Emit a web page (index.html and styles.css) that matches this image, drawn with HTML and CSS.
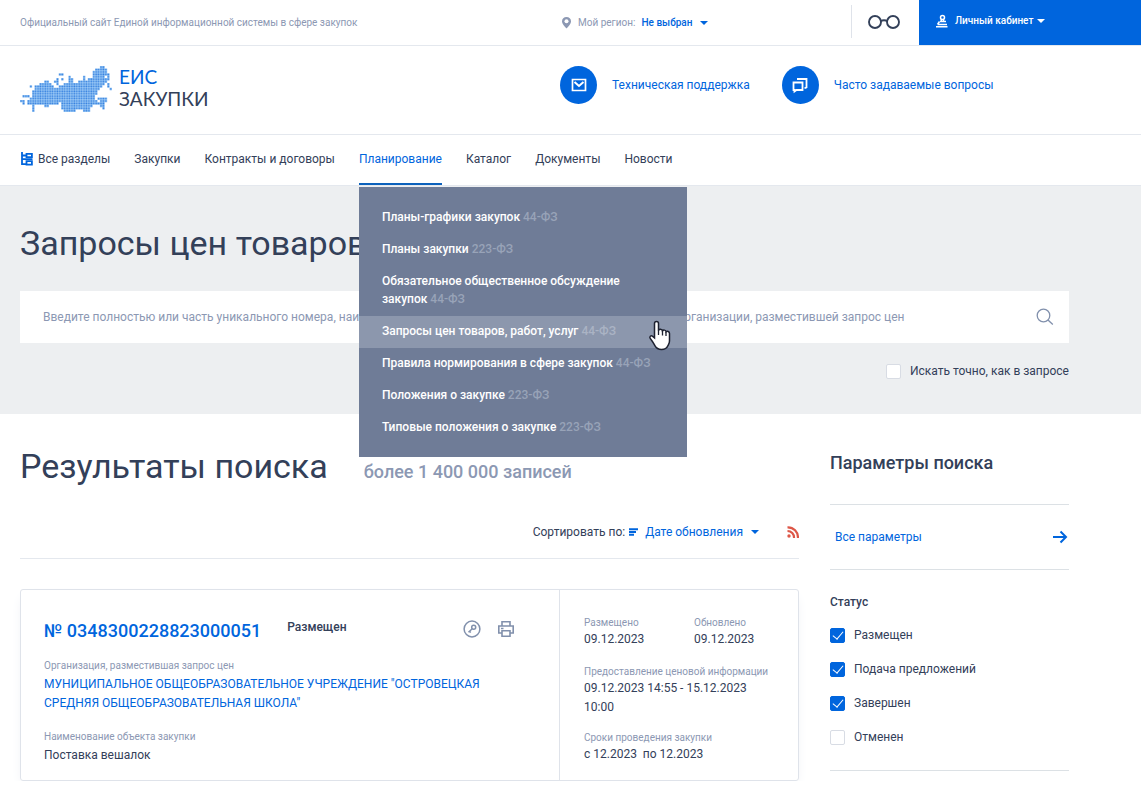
FILE: index.html
```html
<!DOCTYPE html>
<html lang="ru">
<head>
<meta charset="utf-8">
<title>ЕИС Закупки</title>
<link rel="stylesheet" href="styles.css">
</head>
<body>
<div class="topbar">
  <div class="topbar-main">
    <span class="tagline">Официальный сайт Единой информационной системы в сфере закупок</span>
    <div class="region">
      <svg class="pin" width="11" height="13" viewBox="0 0 11 13"><path d="M5.500 1C2.800 1 1 2.900 1 5.200 1 8.200 5.500 12.500 5.500 12.500S10 8.200 10 5.200C10 2.900 8.200 1 5.500 1z" fill="#8c98b3"/><circle cx="5.500" cy="5.200" r="2" fill="#fff"/></svg>
      <span>Мой регион:</span>
      <button class="region-btn" type="button">Не выбран <span class="caret"></span></button>
    </div>
  </div>
  <button class="glasses" type="button" aria-label="Версия для слабовидящих">
    <svg width="32" height="16" viewBox="0 0 32 16" fill="none" stroke="#334059" stroke-width="1.900"><circle cx="7" cy="8" r="6"/><circle cx="25" cy="8" r="6"/><path d="M12.800 7.200c1.500-1.200 4.900-1.200 6.400 0"/></svg>
  </button>
  <button class="account" type="button">
    <svg width="14" height="14" viewBox="0 0 14 14" fill="none" stroke="#fff" stroke-width="1.500"><path d="M1 12.800h11.500M2.500 10.500h9.500M4.500 7.500L2.500 10.500M5 7.500h6M6.300 7V5M8.500 7.500V5"/><circle cx="7.500" cy="3.400" r="2"/></svg>
    <span>Личный кабинет</span><span class="caret"></span>
  </button>
</div>

<header class="header">
  <a class="logo" href="#">
    <svg width="92" height="46" viewBox="0 0 38 19">
      <defs><pattern id="dots" width="1" height="1" patternUnits="userSpaceOnUse"><rect width="1" height="1" fill="#c4e6ff"/><rect x=".1" y=".1" width=".75" height=".75" fill="#3480df"/></pattern></defs>
      <path fill="url(#dots)" d="M33 0h2v1h-2zM31 1h5v1h-5zM30 2h6v1h-6zM16 3h2v1h-2zM30 3h7v1h-7zM20 4h1v1h-1zM26 4h1v1h-1zM30 4h5v1h-5zM36 4h1v1h-1zM15 5h1v1h-1zM17 5h1v1h-1zM20 5h2v1h-2zM26 5h1v1h-1zM28 5h9v1h-9zM10 6h2v1h-2zM14 6h2v1h-2zM20 6h2v1h-2zM24 6h12v1h-12zM8 7h5v1h-5zM15 7h1v1h-1zM18 7h17v1h-17zM36 7h1v1h-1zM4 8h1v1h-1zM6 8h8v1h-8zM16 8h18v1h-18zM36 8h1v1h-1zM6 9h27v1h-27zM37 9h1v1h-1zM5 10h27v1h-27zM5 11h27v1h-27zM1 12h3v1h-3zM5 12h26v1h-26zM4 13h27v1h-27zM32 13h4v1h-4zM0 14h2v1h-2zM3 14h29v1h-29zM33 14h3v1h-3zM1 15h1v1h-1zM3 15h13v1h-13zM17 15h18v1h-18zM5 16h1v1h-1zM10 16h2v1h-2zM17 16h13v1h-13zM33 16h2v1h-2zM5 17h1v1h-1zM17 17h12v1h-12zM34 17h1v1h-1zM5 18h1v1h-1zM18 18h5v1h-5zM26 18h3v1h-3z"/>
    </svg>
    <span class="logo-text"><span class="logo-top">ЕИС</span><span>ЗАКУПКИ</span></span>
  </a>
  <div class="help">
    <a class="help-link" href="#"><span class="disc"><svg width="16" height="14" viewBox="0 0 16 14" fill="none" stroke="#fff" stroke-width="1.700"><path d="M1.500 1.500h13v11h-13z"/><path d="M3.500 4L8 8l4.500-4" stroke-width="2"/></svg></span><span>Техническая поддержка</span></a>
    <a class="help-link" href="#"><span class="disc"><svg width="18" height="18" viewBox="0 0 18 18" fill="none" stroke="#fff" stroke-width="1.800"><path d="M2.500 6.500h9v7.500h-6l-2 1.500V14h-1z"/><path d="M6 3h9.500v9M15.500 11.800h-2"/></svg></span><span>Часто задаваемые вопросы</span></a>
  </div>
</header>

<nav class="nav">
  <a class="nav-item" href="#"><svg width="14" height="14" viewBox="0 0 14 14" fill="none" stroke="#0065dd" stroke-width="1.800"><path d="M2 0v12.200h4M2 3.500h4M6.500 1.800h5.400v3.400H6.500zM6.500 9.200h5.400v3.400H6.500zM2 7.200h10.500"/></svg>Все разделы</a>
  <a class="nav-item" href="#">Закупки</a>
  <a class="nav-item" href="#">Контракты и договоры</a>
  <div class="nav-open">
    <a class="nav-item active" href="#">Планирование</a>
    <div class="menu">
      <a href="#">Планы-графики закупок <span>44-ФЗ</span></a>
      <a href="#">Планы закупки <span>223-ФЗ</span></a>
      <a href="#">Обязательное общественное обсуждение закупок <span>44-ФЗ</span></a>
      <a class="hovered" href="#">Запросы цен товаров, работ, услуг <span>44-ФЗ</span></a>
      <a href="#">Правила нормирования в сфере закупок <span>44-ФЗ</span></a>
      <a href="#">Положения о закупке <span>223-ФЗ</span></a>
      <a href="#">Типовые положения о закупке <span>223-ФЗ</span></a>
      <svg class="pointer" width="24" height="32" viewBox="0 0 24 32"><path d="M8.500 1.500c1.300 0 2 .8 2 2v7c.4-1.800 3.600-1.700 4 .5.700-1.400 3.300-1.200 3.600.8 1-1 3.400-.4 3.400 1.700v7.500c0 2-.8 3.200-1.500 4.500-1 2.500-3 4-6.500 4-3.300 0-5.200-1.400-6.800-4.200C5.300 22.800 4.300 21 2.300 18.500c-1.300-1.700.6-3.500 2.400-2.200l1.800 1.500V3.500c0-1.200.7-2 2-2z" fill="#fff" stroke="#1d2130" stroke-width="1.500"/><path d="M10.500 10v5M14.500 11v4.500M18 12v4" stroke="#1d2130" stroke-width="1.300"/></svg>
    </div>
  </div>
  <a class="nav-item" href="#">Каталог</a>
  <a class="nav-item" href="#">Документы</a>
  <a class="nav-item" href="#">Новости</a>
</nav>

<section class="hero">
  <h1>Запросы цен товаров</h1>
  <form class="search">
    <input class="search-input" type="text" aria-label="Поиск" placeholder="Введите полностью или часть уникального номера, наименования закупки, ИНН, наименование заказчика или организации, разместившей запрос цен">
    <button class="search-btn" type="button" aria-label="Найти"><svg width="18" height="18" viewBox="0 0 18 18" fill="none" stroke="#8190ac" stroke-width="1.300"><circle cx="7.500" cy="7.500" r="6.300"/><path d="M12 12l4.800 4.500"/></svg></button>
  </form>
  <label class="check exact"><input type="checkbox">Искать точно, как в запросе</label>
</section>

<main class="content">
  <section>
    <div class="results-head"><h2>Результаты поиска</h2><span class="count">более 1 400 000 записей</span></div>
    <div class="sort">
      <span>Сортировать по:</span>
      <svg width="9" height="8" viewBox="0 0 9 8" fill="none" stroke="#0065dd" stroke-width="1.900"><path d="M0 1.200h9M0 4h7M0 6.800h5"/></svg>
      <button class="sort-btn" type="button">Дате обновления<span class="caret"></span></button>
      <a class="rss" href="#" aria-label="RSS"><svg width="12" height="12" viewBox="0 0 12 12" fill="none" stroke="#dd5748" stroke-width="2.200"><circle cx="2" cy="10" r="1.700" fill="#dd5748" stroke="none"/><path d="M.5 5a6.500 6.500 0 0 1 6.500 7M.5 1.300A10 10 0 0 1 10.900 12"/></svg></a>
    </div>
    <article class="card">
      <div class="card-main">
        <div class="card-head">
          <a class="number" href="#">№ 0348300228823000051</a>
          <span class="state">Размещен</span>
          <button class="icon-btn" type="button" aria-label="Подпись"><svg width="18" height="18" viewBox="0 0 18 18" fill="none" stroke="#8190ac" stroke-width="1.500"><circle cx="9" cy="9" r="7.900"/><circle cx="10.700" cy="7.200" r="2"/><path d="M9.200 8.700L5.500 12.300M6.500 11.300l1.300 1.200"/></svg></button>
          <button class="icon-btn" type="button" aria-label="Печать"><svg width="18" height="18" viewBox="0 0 18 18" fill="none" stroke="#8190ac" stroke-width="1.600"><path d="M5 6V1.800h8V6M4.500 13H1.800V6h14.400v7h-2.700M5 10.800h8v5.500H5zM4 8.500h2.500"/></svg></button>
        </div>
        <div class="field"><span class="label">Организация, разместившая запрос цен</span><a href="#">МУНИЦИПАЛЬНОЕ ОБЩЕОБРАЗОВАТЕЛЬНОЕ УЧРЕЖДЕНИЕ "ОСТРОВЕЦКАЯ СРЕДНЯЯ ОБЩЕОБРАЗОВАТЕЛЬНАЯ ШКОЛА"</a></div>
        <div class="field"><span class="label">Наименование объекта закупки</span><span>Поставка вешалок</span></div>
      </div>
      <div class="card-side">
        <div class="dates">
          <div class="field"><span class="label">Размещено</span><span>09.12.2023</span></div>
          <div class="field"><span class="label">Обновлено</span><span>09.12.2023</span></div>
        </div>
        <div class="field"><span class="label">Предоставление ценовой информации</span><span>09.12.2023 14:55 - 15.12.2023 10:00</span></div>
        <div class="field"><span class="label">Сроки проведения закупки</span><span>с 12.2023 &nbsp;по 12.2023</span></div>
      </div>
    </article>
  </section>
  <aside class="params">
    <h3>Параметры поиска</h3>
    <a class="all-params" href="#"><span>Все параметры</span><svg width="16" height="14" viewBox="0 0 16 14" fill="none" stroke="#0065dd" stroke-width="2"><path d="M1 7h13M8.500 1.500L14 7l-5.500 5.500"/></svg></a>
    <fieldset class="status">
      <legend>Статус</legend>
      <label class="check"><input type="checkbox" checked>Размещен</label>
      <label class="check"><input type="checkbox" checked>Подача предложений</label>
      <label class="check"><input type="checkbox" checked>Завершен</label>
      <label class="check"><input type="checkbox">Отменен</label>
    </fieldset>
  </aside>
</main>
</body>
</html>
```
FILE: styles.css
```css
* { box-sizing: border-box; }
body { margin: 0; font-family: Roboto, "Liberation Sans", sans-serif; font-size: 12px; line-height: 18px; color: #334059; background: #fff; overflow-x: hidden; }
a { color: #0065dd; text-decoration: none; }
button { font: inherit; border: 0; padding: 0; margin: 0; background: none; cursor: pointer; }
svg { display: block; flex: none; }
h1, h2, h3 { margin: 0; }

.caret { display: inline-block; border: 4px solid transparent; border-top-color: currentColor; border-bottom: 0; }

.topbar { display: flex; height: 46px; border-bottom: 1px solid #e4e8ee; font-size: 10px; line-height: 14px; }
.topbar-main { flex: 1; display: grid; grid-template-columns: 541px 1fr; align-items: center; padding-left: 20px; color: #8c98b3; }
.region { display: flex; align-items: center; gap: 6px; }
.region-btn { display: flex; align-items: center; gap: 8px; color: #0065dd; font-weight: 500; }
.glasses { width: 68px; height: 33px; margin-top: 5px; padding-right: 4px; border-left: 1px solid #dfe3ea; display: flex; align-items: center; justify-content: center; }
.account { width: 222px; height: 45px; padding: 0 16px 4px; display: flex; align-items: center; background: #0065dd; color: #fff; font-weight: 500; }
.account svg { margin-right: 6px; }
.account .caret { margin-left: 4px; }

.header { height: 89px; display: grid; grid-template-columns: 540px 1fr; padding: 20px 72px 0 20px; border-bottom: 1px solid #e4e8ee; }
.logo { display: flex; align-items: flex-start; gap: 7px; height: 46px; color: #334059; }
.logo-text { display: flex; flex-direction: column; font: 400 19px/22px Lato, Roboto, sans-serif; }
.logo-top { color: #0065dd; }
.help { display: flex; align-items: flex-start; gap: 32px; }
.help-link { display: flex; align-items: center; gap: 15px; }
.disc { width: 37px; height: 38px; border-radius: 50%; background: #0065dd; display: flex; align-items: center; justify-content: center; }

.nav { height: 51px; padding: 0 20px; display: flex; gap: 24px; border-bottom: 1px solid #e4e8ee; }
.nav-item { display: flex; align-items: center; gap: 4px; height: 50px; color: #334059; border-bottom: 2px solid transparent; }
.nav-open { position: relative; }
.active { color: #0065dd; border-bottom-color: #0c61bb; }
.menu { position: absolute; z-index: 5; top: 52px; left: 0; width: 328px; padding: 15px 0 13px; background: #6f7c97; font-weight: 500; }
.menu a { display: block; padding: 6px 24px 8px 23px; color: #fff; }
.menu a span { color: #98a3b8; }
.menu a.hovered { background: #8c97ad; }
.menu a.hovered span { color: #aab3c4; }
.pointer { position: absolute; left: 289px; top: 133px; }

.hero { background: #edeff1; padding: 34px 72px 34px 20px; display: flex; flex-direction: column; }
h1, h2 { font-size: 34px; line-height: 46px; font-weight: 400; }
.search { display: flex; height: 52px; margin-top: 25px; background: #fff; }
.search-input { flex: 1; min-width: 0; border: 0; outline: 0; padding: 0 23px; background: none; font: inherit; color: #334059; }
.search-input::placeholder { color: #8c98b3; opacity: 1; }
.search-btn { width: 48px; display: flex; align-items: center; justify-content: center; }
.check { display: flex; align-items: center; gap: 9px; }
.check input { appearance: none; width: 15px; height: 15px; margin: 0; border: 1px solid #d8dce4; border-radius: 2px; background: #fff; }
.check input:checked { border-color: #0065dd; background: #0065dd; display: flex; justify-content: center; }
.check input:checked::after { content: ""; width: 5px; height: 9px; border: solid #fff; border-width: 0 1px 1px 0; transform: rotate(40deg); }
.exact { align-self: flex-end; margin-top: 19px; }

.content { display: grid; grid-template-columns: 1fr 239px; gap: 31px; padding: 29px 72px 0 20px; }
.results-head { display: flex; align-items: baseline; gap: 36px; }
.count { font-size: 18px; font-weight: 500; color: #8c98b3; }
.sort { display: flex; align-items: center; justify-content: flex-end; margin-top: 34px; padding-bottom: 17px; border-bottom: 1px solid #e4e8ee; }
.sort > svg { margin: 0 7px 0 4px; }
.sort-btn { display: flex; align-items: center; gap: 8px; color: #0065dd; }
.rss { margin-left: 28px; }
.card { display: grid; grid-template-columns: 1fr 239px; margin-top: 30px; border: 1px solid #dfe3ea; border-radius: 3px; box-shadow: 0 6px 12px -4px #e6e9f0; }
.card-main { padding: 26px 24px 15px 23px; }
.card-head { display: flex; align-items: center; height: 30px; margin-bottom: 10px; }
.number { font-size: 18px; line-height: 24px; font-weight: 500; }
.state { font-weight: 500; margin: 0 auto 8px 26px; }
.icon-btn { margin: 0 20px 4px -4px; }
.icon-btn + .icon-btn { margin-left: -4px; }
.field { display: flex; flex-direction: column; line-height: 19px; margin-bottom: 14px; }
.field:last-child { margin-bottom: 0; }
.label { font-size: 10px; line-height: 19px; color: #8c98b3; }
.card-side { padding: 26px 20px 15px 24px; border-left: 1px solid #dfe3ea; }
.card-side .label { line-height: 14px; }
.dates { display: grid; grid-template-columns: 110px 1fr; margin-bottom: 16px; }
.dates .field { margin-bottom: 0; }

.params h3 { font-size: 18px; line-height: 24px; font-weight: 500; padding: 8px 0 29px; border-bottom: 1px solid #dce1e5; }
.all-params { display: flex; align-items: center; justify-content: space-between; height: 65px; padding: 0 1px 0 5px; border-bottom: 1px solid #dce1e5; }
.status { margin: 0; padding: 0 0 24px; border: 0; border-bottom: 1px solid #dce1e5; display: flex; flex-direction: column; gap: 16px; }
.status legend { font-weight: 500; padding: 23px 0 15px; }
```
